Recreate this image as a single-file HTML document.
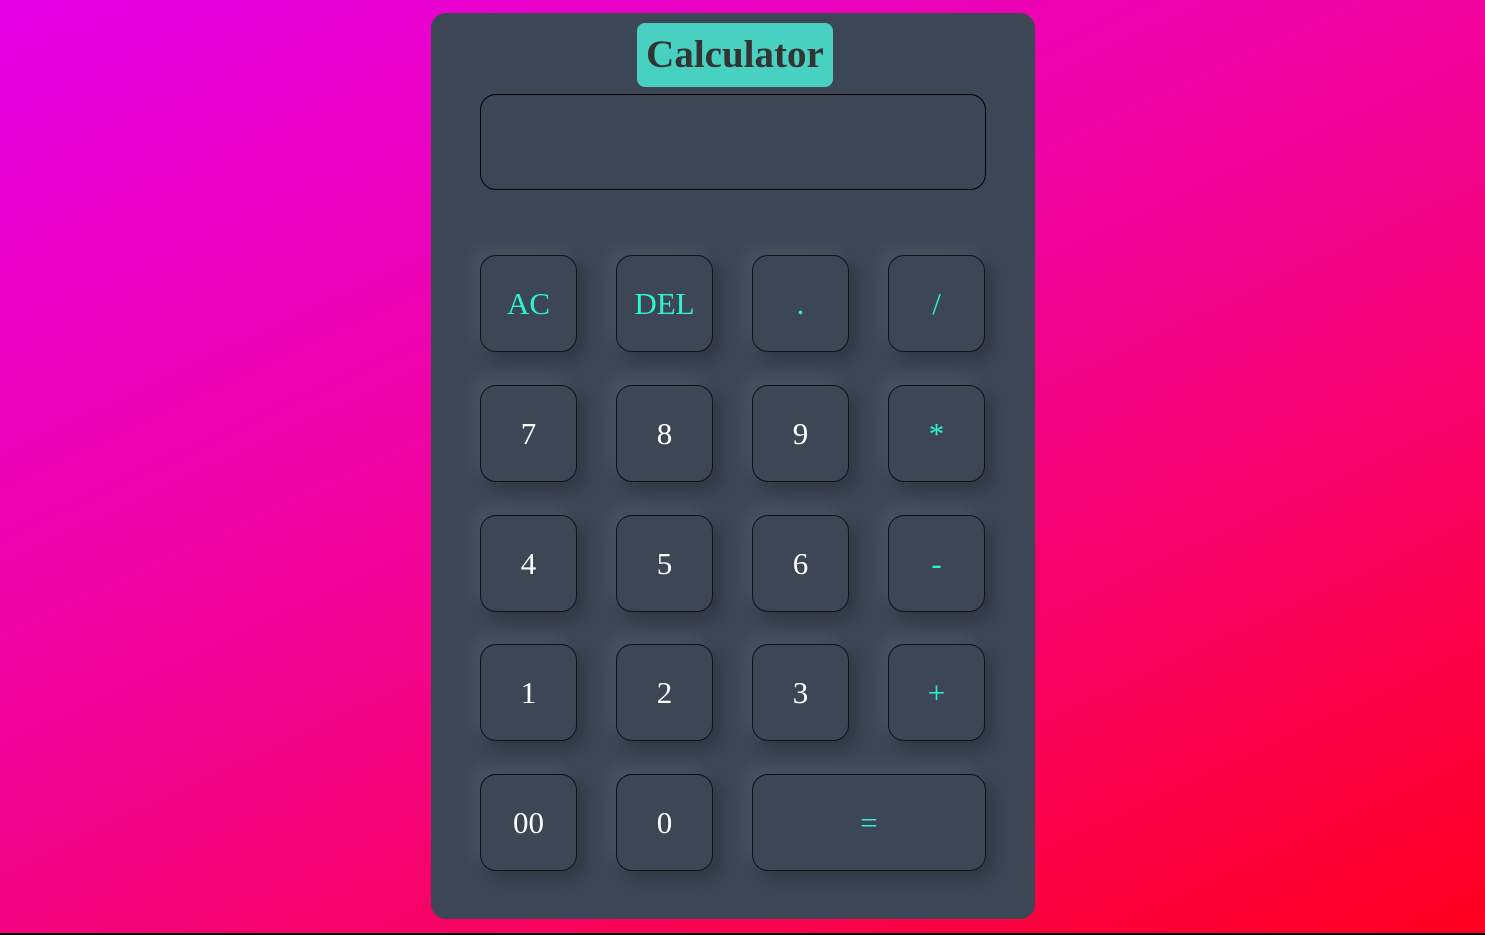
<!DOCTYPE html>
<html><head><meta charset="utf-8"><style>
html,body{margin:0;padding:0;width:1485px;height:935px;overflow:hidden}
body{background:linear-gradient(155deg,#e600e6 0%,#f0049a 45%,#ff0020 100%);position:relative;font-family:"Liberation Serif",serif}
.bar{position:absolute;left:0;right:0;top:933px;height:2px;background:#000}
.calc{position:absolute;left:431px;top:13px;width:604px;height:906px;background:#3c4655;border-radius:15px}
.title{position:absolute;left:206px;top:10px;width:196px;height:64px;background:#48d1c1;border-radius:8px;color:#333;font-weight:bold;font-size:39px;text-align:center;line-height:64px}
.disp{position:absolute;left:49px;top:81px;width:504px;height:94px;border:1px solid #000;border-radius:16px}
.b{position:absolute;width:95px;height:95px;border:1px solid #111;border-radius:16px;color:#fff;font-size:31px;text-align:center;line-height:96px;box-shadow:-8px -8px 16px rgba(255,255,255,0.07),8px 8px 16px rgba(0,0,0,0.22)}
.o{color:#2ff2d2}
</style></head><body>
<div class="calc">
<div class="title">Calculator</div>
<div class="disp"></div>
<div class="b o" style="left:49px;top:242px">AC</div>
<div class="b o" style="left:185px;top:242px">DEL</div>
<div class="b o" style="left:321px;top:242px">.</div>
<div class="b o" style="left:457px;top:242px">/</div>
<div class="b" style="left:49px;top:372px">7</div>
<div class="b" style="left:185px;top:372px">8</div>
<div class="b" style="left:321px;top:372px">9</div>
<div class="b o" style="left:457px;top:372px">*</div>
<div class="b" style="left:49px;top:502px">4</div>
<div class="b" style="left:185px;top:502px">5</div>
<div class="b" style="left:321px;top:502px">6</div>
<div class="b o" style="left:457px;top:502px">-</div>
<div class="b" style="left:49px;top:631px">1</div>
<div class="b" style="left:185px;top:631px">2</div>
<div class="b" style="left:321px;top:631px">3</div>
<div class="b o" style="left:457px;top:631px">+</div>
<div class="b" style="left:49px;top:761px">00</div>
<div class="b" style="left:185px;top:761px">0</div>
<div class="b o" style="left:321px;top:761px;width:232px">=</div>
</div>
<div class="bar"></div>
</body></html>
